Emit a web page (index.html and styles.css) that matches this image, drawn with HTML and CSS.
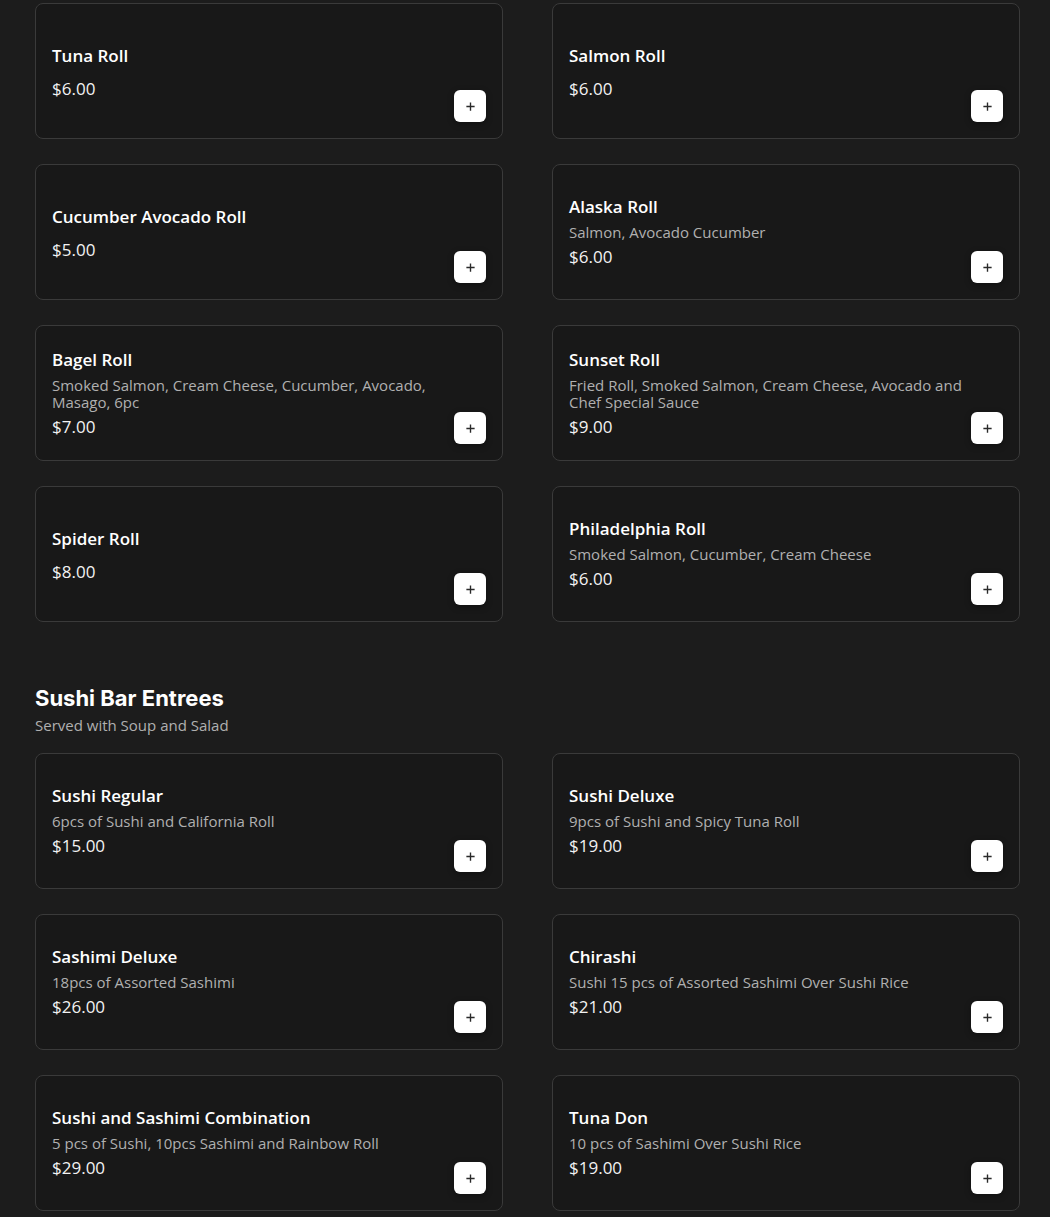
FILE: index.html
```html
<!DOCTYPE html>
<html lang="en">
<head>
<meta charset="utf-8">
<title>Menu</title>
<link rel="stylesheet" href="styles.css">
</head>
<body>
<main class="page">
  <section class="section">
    <div class="grid">
      <div class="card"><div class="info"><div class="name">Tuna Roll</div><div class="price">$6.00</div></div><button class="add" aria-label="Add"><svg viewBox="0 0 12 12"><path d="M6 1.5v9M1.5 6h9"/></svg></button></div>
      <div class="card"><div class="info"><div class="name">Salmon Roll</div><div class="price">$6.00</div></div><button class="add" aria-label="Add"><svg viewBox="0 0 12 12"><path d="M6 1.5v9M1.5 6h9"/></svg></button></div>
      <div class="card"><div class="info"><div class="name">Cucumber Avocado Roll</div><div class="price">$5.00</div></div><button class="add" aria-label="Add"><svg viewBox="0 0 12 12"><path d="M6 1.5v9M1.5 6h9"/></svg></button></div>
      <div class="card"><div class="info"><div class="name">Alaska Roll</div><div class="desc">Salmon, Avocado Cucumber</div><div class="price">$6.00</div></div><button class="add" aria-label="Add"><svg viewBox="0 0 12 12"><path d="M6 1.5v9M1.5 6h9"/></svg></button></div>
      <div class="card"><div class="info"><div class="name">Bagel Roll</div><div class="desc">Smoked Salmon, Cream Cheese, Cucumber, Avocado, Masago, 6pc</div><div class="price">$7.00</div></div><button class="add" aria-label="Add"><svg viewBox="0 0 12 12"><path d="M6 1.5v9M1.5 6h9"/></svg></button></div>
      <div class="card"><div class="info"><div class="name">Sunset Roll</div><div class="desc">Fried Roll, Smoked Salmon, Cream Cheese, Avocado and Chef Special Sauce</div><div class="price">$9.00</div></div><button class="add" aria-label="Add"><svg viewBox="0 0 12 12"><path d="M6 1.5v9M1.5 6h9"/></svg></button></div>
      <div class="card"><div class="info"><div class="name">Spider Roll</div><div class="price">$8.00</div></div><button class="add" aria-label="Add"><svg viewBox="0 0 12 12"><path d="M6 1.5v9M1.5 6h9"/></svg></button></div>
      <div class="card"><div class="info"><div class="name">Philadelphia Roll</div><div class="desc">Smoked Salmon, Cucumber, Cream Cheese</div><div class="price">$6.00</div></div><button class="add" aria-label="Add"><svg viewBox="0 0 12 12"><path d="M6 1.5v9M1.5 6h9"/></svg></button></div>
    </div>
  </section>
  <section class="section">
    <header class="section-head">
      <h2 class="section-title">Sushi Bar Entrees</h2>
      <p class="section-sub">Served with Soup and Salad</p>
    </header>
    <div class="grid">
      <div class="card"><div class="info"><div class="name">Sushi Regular</div><div class="desc">6pcs of Sushi and California Roll</div><div class="price">$15.00</div></div><button class="add" aria-label="Add"><svg viewBox="0 0 12 12"><path d="M6 1.5v9M1.5 6h9"/></svg></button></div>
      <div class="card"><div class="info"><div class="name">Sushi Deluxe</div><div class="desc">9pcs of Sushi and Spicy Tuna Roll</div><div class="price">$19.00</div></div><button class="add" aria-label="Add"><svg viewBox="0 0 12 12"><path d="M6 1.5v9M1.5 6h9"/></svg></button></div>
      <div class="card"><div class="info"><div class="name">Sashimi Deluxe</div><div class="desc">18pcs of Assorted Sashimi</div><div class="price">$26.00</div></div><button class="add" aria-label="Add"><svg viewBox="0 0 12 12"><path d="M6 1.5v9M1.5 6h9"/></svg></button></div>
      <div class="card"><div class="info"><div class="name">Chirashi</div><div class="desc">Sushi 15 pcs of Assorted Sashimi Over Sushi Rice</div><div class="price">$21.00</div></div><button class="add" aria-label="Add"><svg viewBox="0 0 12 12"><path d="M6 1.5v9M1.5 6h9"/></svg></button></div>
      <div class="card"><div class="info"><div class="name">Sushi and Sashimi Combination</div><div class="desc">5 pcs of Sushi, 10pcs Sashimi and Rainbow Roll</div><div class="price">$29.00</div></div><button class="add" aria-label="Add"><svg viewBox="0 0 12 12"><path d="M6 1.5v9M1.5 6h9"/></svg></button></div>
      <div class="card"><div class="info"><div class="name">Tuna Don</div><div class="desc">10 pcs of Sashimi Over Sushi Rice</div><div class="price">$19.00</div></div><button class="add" aria-label="Add"><svg viewBox="0 0 12 12"><path d="M6 1.5v9M1.5 6h9"/></svg></button></div>
    </div>
  </section>
</main>
</body>
</html>
```

FILE: styles.css
```css
* { box-sizing: border-box; }
html, body { margin: 0; padding: 0; }
body {
  background: #1c1c1c;
  color: #ffffff;
  font-family: "Open Sans", "DejaVu Sans", sans-serif;
}
.page {
  padding: 3px 30px 0 35px;
}
.section + .section { margin-top: 62px; }
.grid {
  display: grid;
  grid-template-columns: 1fr 1fr;
  gap: 25px 49px;
}
.card {
  height: 136px;
  display: flex;
  align-items: center;
  padding: 16px;
  background: #181818;
  border: 1px solid #3a3a3a;
  border-radius: 8px;
}
.info {
  flex: 1;
  min-width: 0;
}
.info:not(:has(.desc)) { padding-top: 2px; }
.name {
  font-size: 17px;
  font-weight: 600;
  line-height: 24px;
  margin-bottom: 5px;
  color: #ffffff;
}
.name + .price { margin-top: 9px; }
.desc {
  font-size: 15px;
  line-height: 17px;
  margin-bottom: 4px;
  color: #b0b0b0;
}
.price {
  font-size: 17px;
  line-height: 24px;
  color: #f2f2f2;
}
.add {
  align-self: flex-end;
  flex: none;
  width: 32px;
  height: 32px;
  padding: 0;
  border: none;
  border-radius: 6px;
  background: #ffffff;
  box-shadow: 0 2px 6px rgba(0,0,0,0.35);
  display: flex;
  align-items: center;
  justify-content: center;
}
.add svg {
  width: 11px;
  height: 11px;
  fill: none;
  stroke: #2a2a2a;
  stroke-width: 1.5;
}
.section-head { margin-bottom: 18px; }
.section-title {
  margin: 0;
  font-family: Inter, Roboto, "Liberation Sans", sans-serif;
  font-size: 22px;
  font-weight: 700;
  line-height: 28px;
}
.section-sub {
  margin: 3px 0 0;
  font-size: 15px;
  line-height: 20px;
  color: #b0b0b0;
}
```
